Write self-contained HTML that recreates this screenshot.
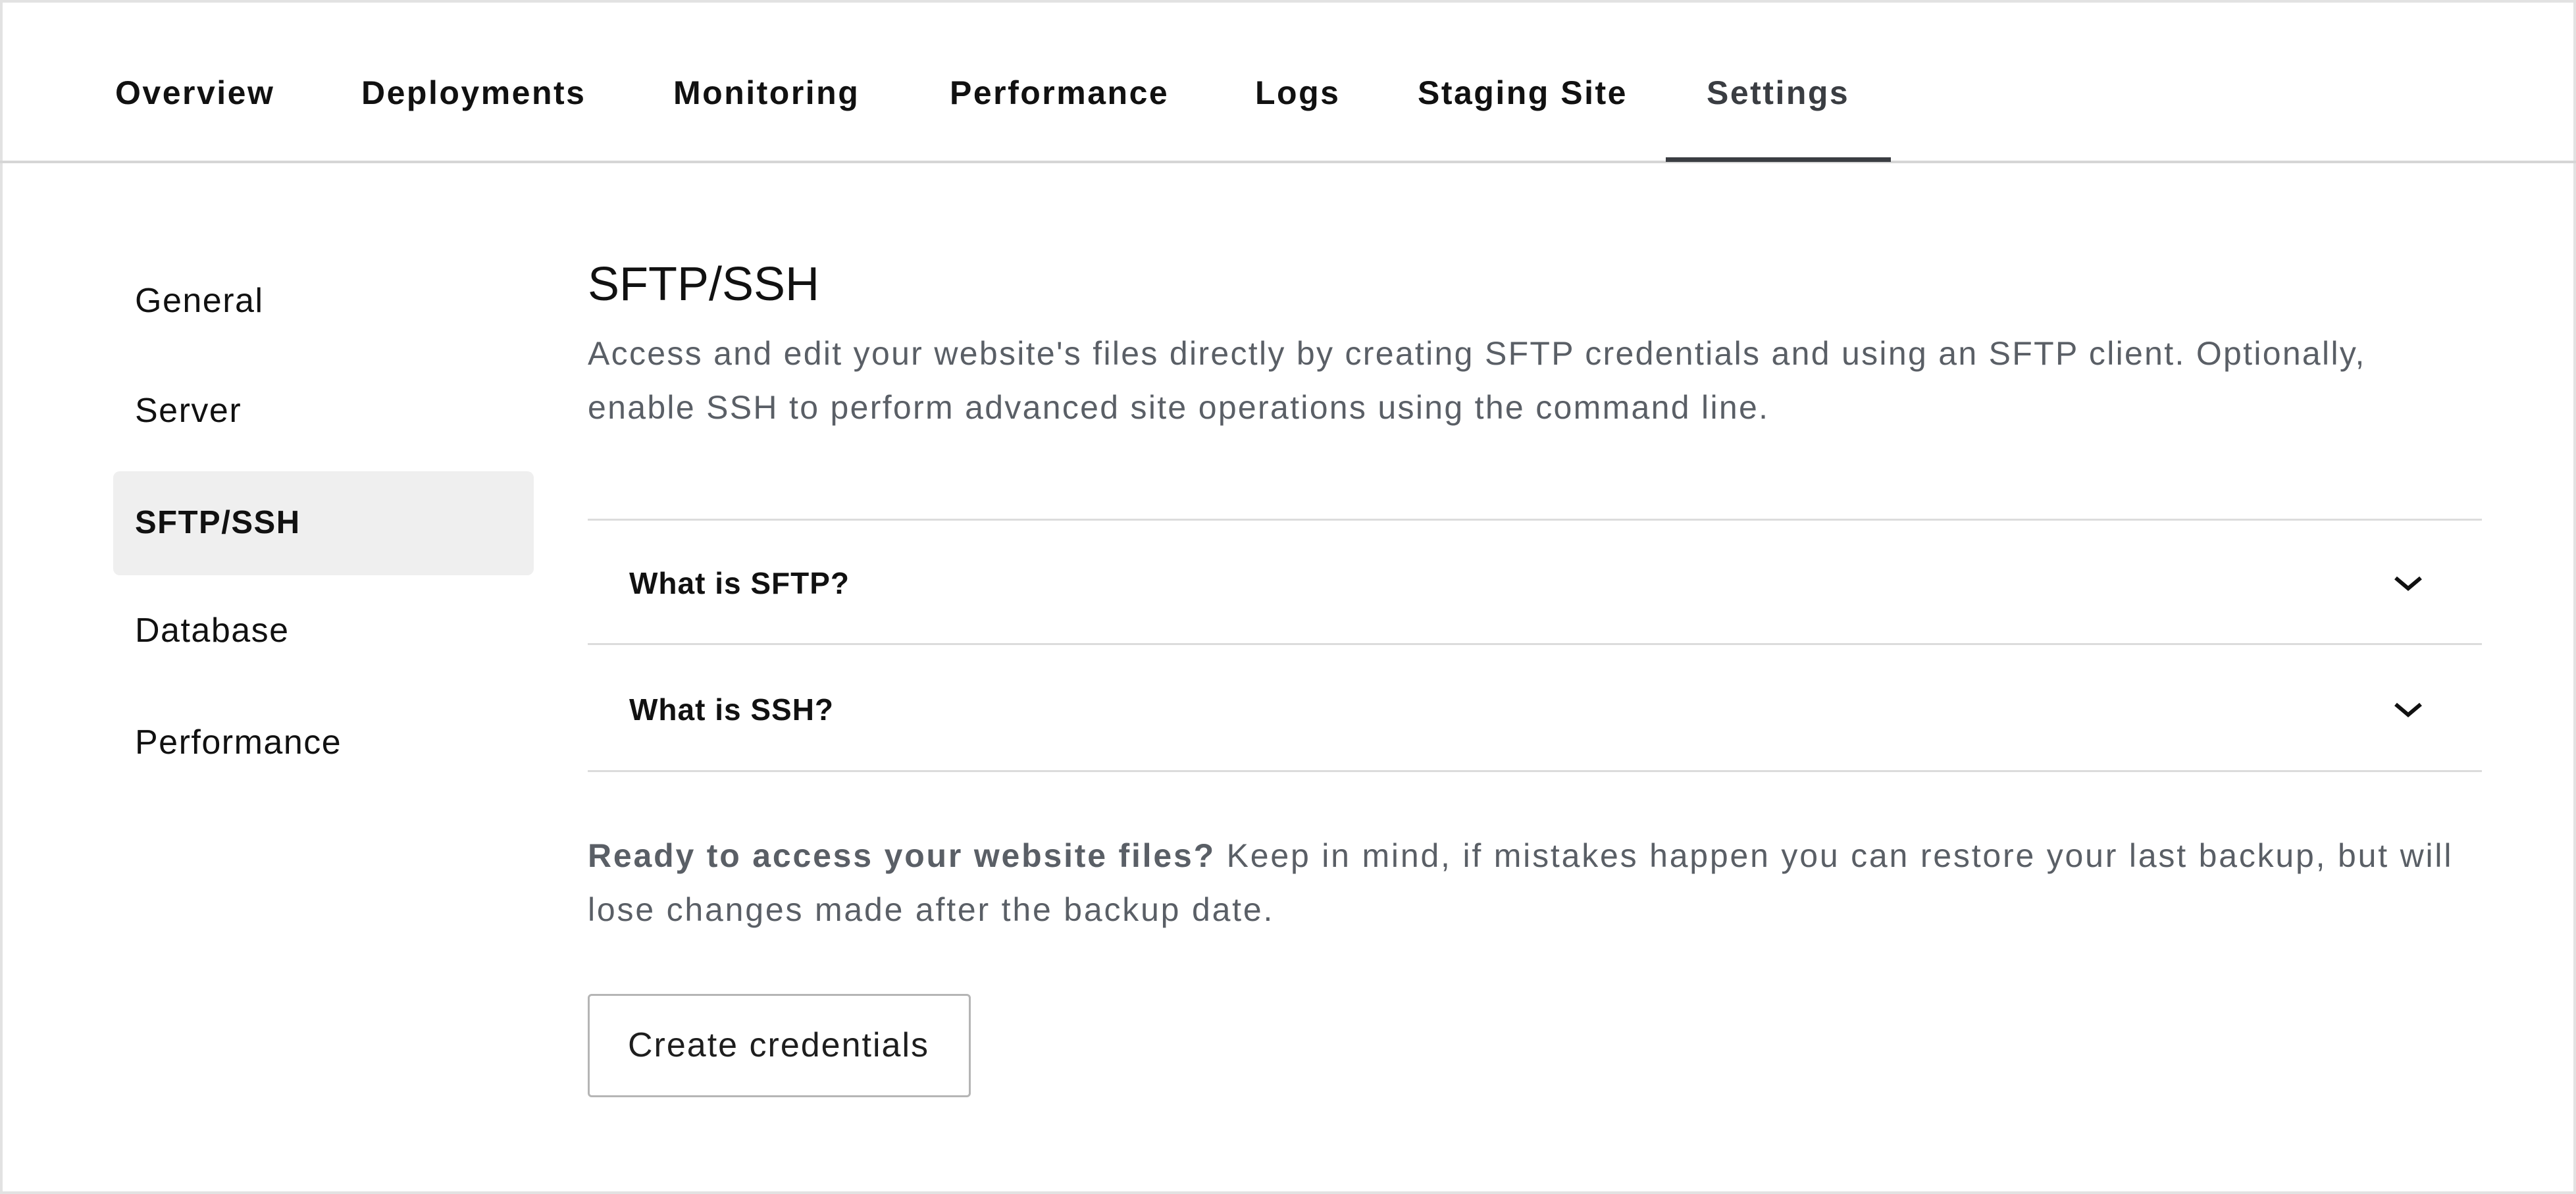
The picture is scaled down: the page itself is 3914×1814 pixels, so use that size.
<!DOCTYPE html>
<html><head><meta charset="utf-8"><style>
*{margin:0;padding:0;box-sizing:border-box}
body{width:3914px;height:1814px;background:#fff;font-family:"Liberation Sans",sans-serif;position:relative;overflow:hidden;color:#111}
.frame{position:absolute;left:0;top:0;width:3914px;height:1814px;border:4px solid #e2e2e2}
.hdr{position:absolute;left:0;top:244px;width:3914px;height:4px;background:#d6d6d6}
.tab{position:absolute;top:111px;font-size:50px;font-weight:bold;letter-spacing:2.5px;line-height:60px;white-space:nowrap;color:#111}
.ul{position:absolute;left:2531px;top:239px;width:342px;height:7px;background:#3a3d42}
.side{position:absolute;left:205px;font-size:52px;letter-spacing:1.5px;line-height:60px;color:#111;white-space:nowrap}
.act{position:absolute;left:172px;top:716px;width:639px;height:158px;background:#efefef;border-radius:10px}
h1{position:absolute;left:893px;top:385px;font-size:72px;font-weight:normal;line-height:94px;color:#111}
.p{position:absolute;left:893px;font-size:50px;letter-spacing:2.3px;line-height:82px;color:#5a5f66;white-space:nowrap}
.line{position:absolute;left:893px;width:2878px;height:3px;background:#dcdcdc}
.q{position:absolute;left:956px;font-size:46px;letter-spacing:1px;font-weight:bold;line-height:60px;color:#111}
.chev{position:absolute;left:3636px;width:46px;height:26px}
.btn{position:absolute;left:893px;top:1510px;width:582px;height:157px;border:3px solid #b5b5b5;border-radius:6px;font-size:52px;letter-spacing:2px;color:#1e1e1e;line-height:151px;padding-left:58px;white-space:nowrap}
</style></head><body>
<div class="frame"></div>
<div class="tab" style="left:175px">Overview</div>
<div class="tab" style="left:549px">Deployments</div>
<div class="tab" style="left:1023px">Monitoring</div>
<div class="tab" style="left:1443px">Performance</div>
<div class="tab" style="left:1907px">Logs</div>
<div class="tab" style="left:2154px">Staging Site</div>
<div class="tab" style="left:2593px;color:#3a3d42">Settings</div>
<div class="hdr"></div>
<div class="ul"></div>

<div class="act"></div>
<div class="side" style="top:427px">General</div>
<div class="side" style="top:594px">Server</div>
<div class="side" style="top:764px;font-weight:bold;font-size:49px">SFTP/SSH</div>
<div class="side" style="top:928px">Database</div>
<div class="side" style="top:1098px">Performance</div>

<h1>SFTP/SSH</h1>
<div class="p" style="top:496px">Access and edit your website's files directly by creating SFTP credentials and using an SFTP client. Optionally,<br>enable SSH to perform advanced site operations using the command line.</div>

<div class="line" style="top:788px"></div>
<div class="q" style="top:856px">What is SFTP?</div>
<svg class="chev" style="top:873px" viewBox="0 0 46 26"><path d="M4 5 L23 21 L42 5" fill="none" stroke="#111" stroke-width="6"/></svg>
<div class="line" style="top:977px"></div>
<div class="q" style="top:1048px">What is SSH?</div>
<svg class="chev" style="top:1065px" viewBox="0 0 46 26"><path d="M4 5 L23 21 L42 5" fill="none" stroke="#111" stroke-width="6"/></svg>
<div class="line" style="top:1170px"></div>

<div class="p" style="top:1259px;letter-spacing:2.8px"><b>Ready to access your website files?</b> Keep in mind, if mistakes happen you can restore your last backup, but will<br>lose changes made after the backup date.</div>

<div class="btn">Create credentials</div>
</body></html>
